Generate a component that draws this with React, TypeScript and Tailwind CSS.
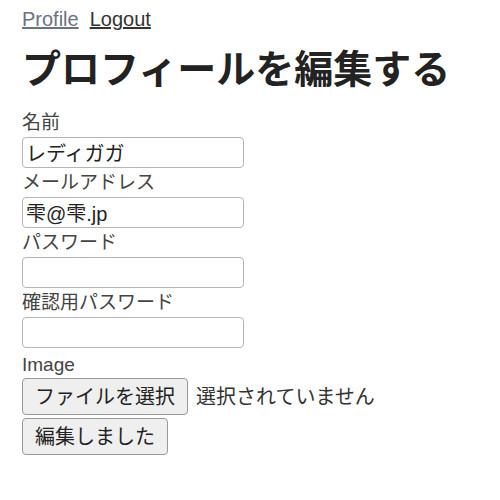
import React from 'react';

const fields = [
  { label: '名前', value: 'レディガガ', type: 'text' },
  { label: 'メールアドレス', value: '雫@雫.jp', type: 'text' },
  { label: 'パスワード', value: '', type: 'password' },
  { label: '確認用パスワード', value: '', type: 'password' },
];

const App: React.FC = () => {
  return (
    <div
      className="min-h-[500px] bg-white pl-[22px] pt-[8px] text-[#222]"
      style={{ fontFamily: '"Liberation Sans", "Noto Sans CJK JP", sans-serif' }}
    >
      {/* Nav */}
      <div className="flex gap-[11px] text-[20px] leading-[23px]">
        <a href="#" className="text-gray-500 underline">Profile</a>
        <a href="#" className="text-[#333] underline">Logout</a>
      </div>

      <h1 className="mt-[16px] text-[39px] font-bold leading-[46px] text-[#222]">
        プロフィールを編集する
      </h1>

      <form className="mt-[17px] flex flex-col">
        {fields.map((f) => (
          <div key={f.label} className="mb-[2px] flex flex-col">
            <label className="flex h-[26px] items-center text-[19px] text-[#444]">{f.label}</label>
            <input
              type={f.type}
              readOnly
              defaultValue={f.value}
              className="mt-[1px] h-[31px] w-[222px] rounded-[4px] border border-[#b5b5b5] px-[3px] text-[20px] text-[#222] outline-none"
            />
          </div>
        ))}

        <label className="mt-[2px] flex h-[26px] items-center text-[19px] text-[#444]">Image</label>
        <div className="flex items-center gap-[8px]">
          <button
            type="button"
            className="h-[37px] rounded-[4px] border border-[#9a9a9a] bg-[#efefef] px-[12px] text-[20px] text-[#222]"
          >
            ファイルを選択
          </button>
          <span className="text-[20px] text-[#333]">選択されていません</span>
        </div>

        <div className="mt-[3px]">
          <button
            type="submit"
            className="h-[37px] rounded-[4px] border border-[#9a9a9a] bg-[#efefef] px-[12px] text-[20px] text-[#222]"
          >
            編集しました
          </button>
        </div>
      </form>
    </div>
  );
};

export default App;
